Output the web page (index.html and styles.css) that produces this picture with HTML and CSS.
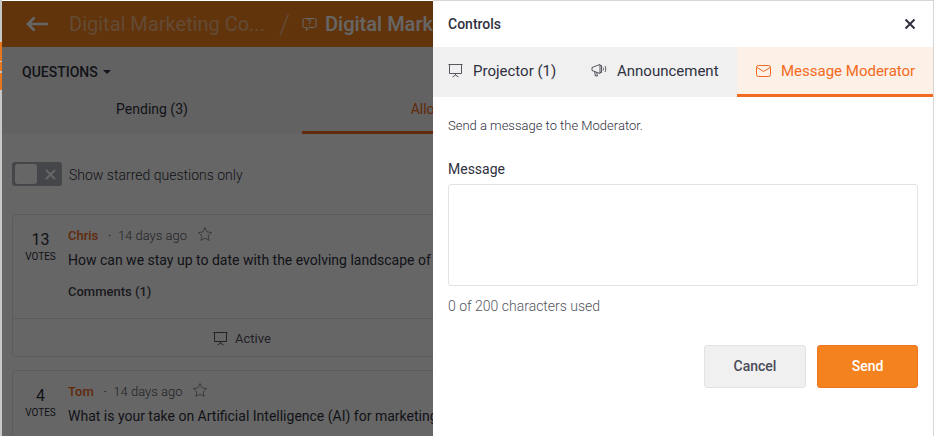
FILE: index.html
```html
<!DOCTYPE html>
<html lang="en">
<head>
<meta charset="utf-8">
<title>Controls</title>
<link rel="stylesheet" href="styles.css">
</head>
<body>
<div class="edge"><span class="edge-a"></span><span class="edge-b"></span><span class="edge-c"></span></div>
<main class="page">
  <header class="topbar">
    <svg class="back" width="24" height="16" viewBox="0 0 24 16"><path d="M23 8H3M9.500 1.500 3 8l6.500 6.500" fill="none" stroke="currentColor" stroke-width="2.600"/></svg>
    <span class="crumb">Digital Marketing Co...</span>
    <span class="slash">/</span>
    <svg class="qicon" width="15" height="15" viewBox="0 0 15 15"><path d="M2.500 1.500h10a1.500 1.500 0 0 1 1.500 1.500v6a1.500 1.500 0 0 1-1.500 1.500H7l-2.500 3v-3h-2A1.500 1.500 0 0 1 1 9V3a1.500 1.500 0 0 1 1.500-1.500Z" fill="none" stroke="currentColor"/><text x="7.500" y="8.500" text-anchor="middle" class="qmark">?</text></svg>
    <span class="crumb-current">Digital Marketing Conference</span>
  </header>
  <div class="section-row">QUESTIONS<span class="caret"></span></div>
  <nav class="list-tabs">
    <span class="list-tab">Pending (3)</span>
    <span class="list-tab list-tab-active">Allowed (12)</span>
  </nav>
  <div class="toggle-row">
    <span class="toggle"><span class="knob"></span><svg class="toggle-x" width="11" height="11" viewBox="0 0 11 11"><path d="m1 1 9 9m0-9-9 9" fill="none" stroke="currentColor" stroke-width="2"/></svg></span>
    <span class="toggle-label">Show starred questions only</span>
  </div>
  <article class="card">
    <div class="card-main">
      <div class="votes"><b>13</b><small>VOTES</small></div>
      <div class="q-body">
        <div class="q-meta"><span class="author">Chris</span><span class="dot">•</span><span>14 days ago</span>
          <svg class="star" width="16" height="16" viewBox="0 0 16 16"><path d="m8 1.500 2 4.400 4.700.6-3.500 3.200.9 4.700L8 12.100l-4.100 2.300.9-4.700L1.300 6.500 6 5.900Z" fill="none" stroke="currentColor" stroke-width=".9"/></svg>
        </div>
        <p class="q-text">How can we stay up to date with the evolving landscape of digital marketing?</p>
        <div class="comments">Comments (1)</div>
      </div>
    </div>
    <div class="card-foot">
      <svg width="15" height="15" viewBox="0 0 15 15"><path d="M.5 1.500h14M1.500 1.500v9h12v-9M7.500 10.500v1.500M4.500 14l3-2 3 2" fill="none" stroke="currentColor"/></svg>
      <span>Active</span>
    </div>
  </article>
  <article class="card">
    <div class="card-main">
      <div class="votes"><b>4</b><small>VOTES</small></div>
      <div class="q-body">
        <div class="q-meta"><span class="author">Tom</span><span class="dot">•</span><span>14 days ago</span>
          <svg class="star" width="16" height="16" viewBox="0 0 16 16"><path d="m8 1.500 2 4.400 4.700.6-3.500 3.200.9 4.700L8 12.100l-4.100 2.300.9-4.700L1.300 6.500 6 5.900Z" fill="none" stroke="currentColor" stroke-width=".9"/></svg>
        </div>
        <p class="q-text">What is your take on Artificial Intelligence (AI) for marketing teams this year?</p>
      </div>
    </div>
  </article>
</main>
<div class="overlay"></div>
<aside class="panel">
  <div class="panel-head">
    <h2>Controls</h2>
    <svg class="close" width="12" height="12" viewBox="0 0 12 12"><path d="m1.500 1.500 9 9m0-9-9 9" fill="none" stroke="currentColor" stroke-width="2"/></svg>
  </div>
  <div class="tabs">
    <div class="tab tab-projector">
      <svg class="tab-icon" width="15" height="15" viewBox="0 0 15 15"><path d="M.5 1.500h14M1.500 1.500v9h12v-9M7.500 10.500v1.500M4.500 14l3-2 3 2" fill="none" stroke="currentColor" stroke-width=".9"/></svg>
      <span>Projector (1)</span>
    </div>
    <div class="tab tab-announce">
      <svg class="tab-icon" width="16" height="15" viewBox="0 0 16 15"><path d="M1 4.500 9 1.500v9L1 7.500ZM9 2.500h1.500v7H9M3.500 8.500l1 4.500h2l-1-3.800M12 4.500c.6 1 .6 2 0 3M14 3c1 1.900 1 4.100 0 6" fill="none" stroke="currentColor" stroke-width=".9"/></svg>
      <span>Announcement</span>
    </div>
    <div class="tab tab-active">
      <svg width="15" height="12" viewBox="0 0 15 12"><rect x=".5" y=".5" width="14" height="11" rx="1.800" fill="none" stroke="currentColor"/><path d="m1 2.500 6.500 4 6.500-4" fill="none" stroke="currentColor"/></svg>
      <span>Message Moderator</span>
    </div>
  </div>
  <div class="panel-body">
    <p class="intro">Send a message to the Moderator.</p>
    <label class="field-label" for="msg">Message</label>
    <textarea class="field" id="msg"></textarea>
    <p class="counter">0 of 200 characters used</p>
    <div class="actions">
      <button class="btn btn-cancel" type="button">Cancel</button>
      <button class="btn btn-send" type="button">Send</button>
    </div>
  </div>
</aside>
</body>
</html>
```
FILE: styles.css
```css
* { box-sizing: border-box; }
html, body { margin: 0; height: 100%; overflow: hidden; }
body {
  width: 934px;
  height: 436px;
  position: relative;
  background: #fff;
  font-family: Roboto, "Liberation Sans", sans-serif;
  color: #2f3140;
}
.edge {
  position: absolute;
  left: 0;
  top: 0;
  width: 2px;
  height: 100%;
  background: #c8c8c8;
  z-index: 5;
}
.edge span { display: block; position: absolute; left: 0; width: 2px; background: #e8761c; }
.edge-a { top: 42px; height: 19px; }
.edge-b { top: 62px; height: 9px; }
.edge-c { top: 73px; height: 17px; }
.page {
  margin: 1px 0 0 2px;
  width: 931px;
  height: 435px;
  overflow: hidden;
  background: #fff;
}
.topbar {
  height: 46px;
  background: #f3821f;
  display: flex;
  align-items: center;
  padding: 0 0 0 23px;
  color: #fff;
  white-space: nowrap;
}
.back { margin-right: 20px; color: #fff; }
.crumb { font-size: 20px; color: rgba(255, 255, 255, .45); }
.slash { font-size: 28px; font-weight: 300; color: rgba(255, 255, 255, .45); margin: 0 12px 0 14px; }
.qicon { margin-right: 8px; color: #fff; }
.qmark { font-size: 9px; fill: currentColor; font-family: Roboto, sans-serif; }
.crumb-current { width: 108px; overflow: hidden; font-size: 20px; font-weight: 500; }
.section-row {
  height: 43px;
  background: #f6f6f6;
  display: flex;
  align-items: center;
  padding: 6px 0 0 20px;
  font-size: 14px;
  font-weight: 500;
}
.caret {
  margin-left: 5px;
  border: 4px solid transparent;
  border-top-color: currentColor;
  border-bottom-width: 0;
}
.list-tabs { display: flex; height: 44px; background: #f6f6f6; }
.list-tab {
  width: 300px;
  display: flex;
  justify-content: center;
  padding-top: 11px;
  font-size: 14px;
}
.list-tab-active {
  width: 296px;
  color: #f26a21;
  border-bottom: 3px solid #f26a21;
}
.toggle-row {
  display: flex;
  align-items: center;
  gap: 7px;
  margin: 28px 0 0 10px;
  height: 24px;
  font-size: 14px;
  font-weight: 300;
}
.toggle-label { padding-top: 2px; }
.toggle {
  width: 50px;
  height: 24px;
  border-radius: 3px;
  background: #adb0ba;
  display: flex;
  align-items: center;
  padding: 2px 3px;
  justify-content: space-between;
}
.knob { width: 22px; height: 20px; border-radius: 3px; background: #fff; }
.toggle-x { color: #fff; margin-right: 3px; }
.card {
  margin: 28px 0 0 10px;
  width: 700px;
  border: 1px solid #e6e6e6;
  border-radius: 4px;
}
.card + .card { margin-top: 13px; }
.card-main { display: flex; padding: 10px 0 0; height: 103px; }
.votes { width: 55px; display: flex; flex-direction: column; align-items: center; padding-top: 5px; }
.votes b { font-size: 16px; font-weight: 400; line-height: 20px; }
.votes small { font-size: 10px; line-height: 14px; }
.q-meta { display: flex; align-items: center; height: 20px; font-size: 13px; font-weight: 300; color: #55565f; }
.author { color: #f26a21; font-weight: 500; }
.dot { font-size: 8px; margin: 0 7px 0 10px; }
.star { margin: -3px 0 0 10px; color: #8a8a8a; }
.q-text { margin: 5px 0 0; font-size: 14px; line-height: 20px; white-space: nowrap; }
.comments { margin-top: 12px; font-size: 13px; font-weight: 500; line-height: 20px; color: #44454f; }
.card-foot {
  height: 38px;
  border-top: 1px solid #e6e6e6;
  display: flex;
  align-items: center;
  padding: 2px 0 0 200px;
  gap: 7px;
  font-size: 13px;
  color: #55565f;
}
.overlay {
  position: absolute;
  inset: 1px 0 0 2px;
  background: rgba(0, 0, 0, .6);
}
.panel {
  position: absolute;
  left: 433px;
  top: 0;
  width: 501px;
  height: 436px;
  background: #fff;
  border-top: 1px solid #d6d6d6;
  border-right: 1px solid #d6d6d6;
}
.panel-head {
  height: 46px;
  display: flex;
  align-items: center;
  justify-content: space-between;
  padding: 0 17px 0 15px;
  color: #2f3140;
}
.panel-head h2 { margin: 0; font-size: 14px; font-weight: 500; }
.tabs { display: flex; height: 50px; background: #f0f0f0; font-size: 15px; }
.tab { display: flex; align-items: center; height: 50px; }
.tab-icon { color: #45464f; }
.tab-projector { width: 143px; padding: 0 0 3px 15px; gap: 10px; }
.tab-announce { width: 161px; padding: 0 0 3px 15px; gap: 10px; }
.tab-active {
  flex: 1;
  padding: 0 0 0 19px;
  gap: 10px;
  color: #f26a21;
  background: #fdf0e6;
  border-bottom: 3px solid #f26a21;
}
.panel-body { padding: 0 15px; }
.intro { margin: 21px 0 0; font-size: 13px; line-height: 15px; font-weight: 300; }
.field-label { display: block; margin-top: 28px; font-size: 14px; line-height: 16px; }
.field {
  display: block;
  margin-top: 7px;
  width: 470px;
  height: 102px;
  border: 1px solid #e3e3e3;
  border-radius: 3px;
  background: #fff;
  resize: none;
}
.counter { margin: 12px 0 0; font-size: 14px; line-height: 16px; font-weight: 300; color: #555661; }
.actions { display: flex; justify-content: flex-end; gap: 11px; margin-top: 31px; }
.btn {
  height: 43px;
  padding: 0 0 2px;
  border-radius: 3px;
  font-family: inherit;
  font-size: 14px;
  font-weight: 500;
}
.btn-cancel { width: 102px; background: #f0f0f0; border: 1px solid #e3e3e3; color: #4a4b59; }
.btn-send { width: 101px; background: #f3821f; border: 1px solid #ee7420; color: #fff; }
```
